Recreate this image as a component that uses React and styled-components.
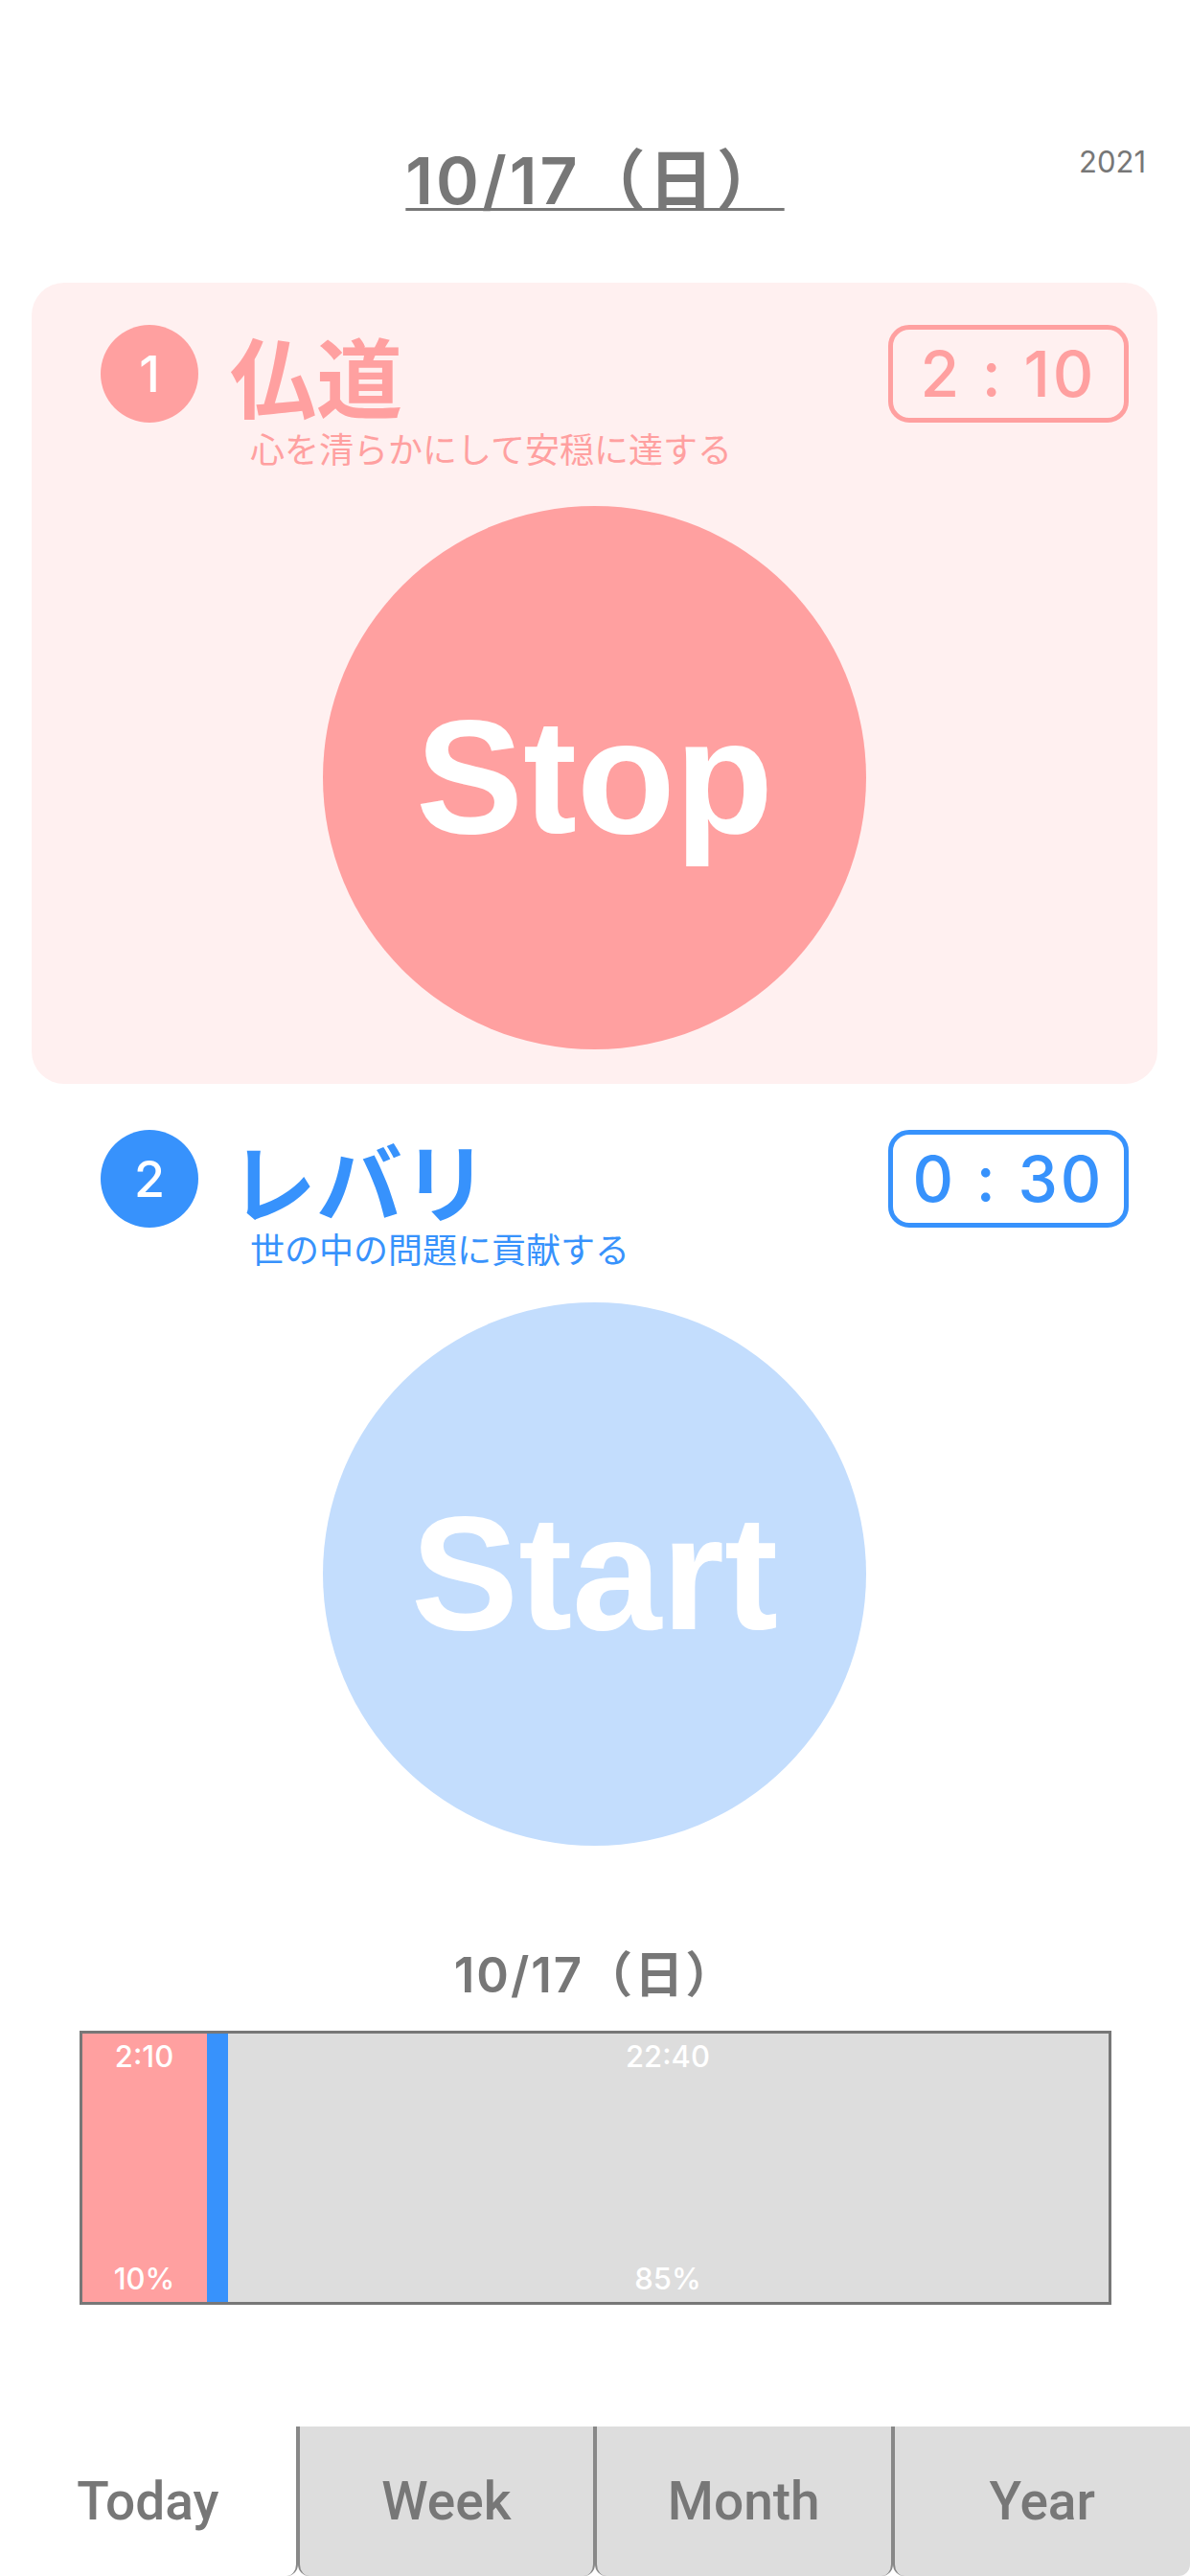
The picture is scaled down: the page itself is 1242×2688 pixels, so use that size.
import React from "react";
import styled, { createGlobalStyle } from "styled-components";

const GlobalStyle = createGlobalStyle`
html, body {
    margin: 0;
    padding: 0;
    background: #ffffff;
}

body {
    font-family: "Noto Sans CJK JP", "Noto Sans", sans-serif;
}
`

const pink = "#ffa0a0";
const blue = "#3792fc";
const gray = "#777777";
const latin = `Inter, "Noto Sans CJK JP", sans-serif`;

const Page = styled.div`
display: flex;
flex-direction: column;
min-height: 100vh;
box-sizing: border-box;
padding-top: 147px;
`

const Header = styled.header`
display: grid;
grid-template-columns: 1fr auto 1fr;
align-items: start;
`

const DateTitle = styled.h1`
grid-column: 2;
margin: 0;
font-family: ${latin};
font-size: 68px;
line-height: 82px;
font-weight: 600;
letter-spacing: 3px;
color: ${gray};
text-decoration: underline;
text-decoration-thickness: 3px;
text-underline-offset: 4px;
white-space: pre;
`

const Year = styled.span`
grid-column: 3;
justify-self: end;
margin: 3px 46px 0 0;
font-family: ${latin};
font-size: 31px;
line-height: 38px;
color: ${gray};
`

const Card = styled.section`
display: flex;
flex-direction: column;
margin: ${props => props.$mt}px 34px 0 33px;
padding: 44px 30px ${props => props.$pb}px;
border-radius: 34px;
background: ${props => props.$bg};
`

const Row = styled.div`
display: flex;
align-items: center;
height: 102px;
padding-left: 42px;
`

const Badge = styled.div`
display: flex;
align-items: center;
justify-content: center;
width: 102px;
height: 102px;
border-radius: 50%;
background: ${props => props.$color};
color: #ffffff;
font-family: ${latin};
font-size: 52px;
font-weight: 500;
`

const Title = styled.h2`
margin: 0 0 0 33px;
font-size: 90px;
line-height: 1;
font-weight: 700;
color: ${props => props.$color};
`

const TimeBox = styled.div`
display: flex;
align-items: center;
justify-content: center;
margin-left: auto;
width: 251px;
height: 102px;
box-sizing: border-box;
border: 5px solid ${props => props.$color};
border-radius: 22px;
color: ${props => props.$color};
font-family: ${latin};
font-size: 66px;
font-weight: 500;
letter-spacing: 3px;
white-space: pre;
`

const Subtitle = styled.p`
margin: ${props => props.$gap}px 0 0;
padding-left: 198px;
font-size: 36px;
line-height: 42px;
color: ${props => props.$color};
`

const BigButton = styled.button`
align-self: center;
width: 567px;
height: 567px;
margin-top: ${props => props.$mt}px;
padding: 0;
border: none;
border-radius: 50%;
background: ${props => props.$bg};
color: #ffffff;
font-family: "Liberation Sans", Arial, sans-serif;
font-size: 168px;
font-weight: 700;
`

const DayLabel = styled.h3`
margin: 104px 0 0;
text-align: center;
font-family: ${latin};
font-size: 51px;
line-height: 61px;
font-weight: 600;
letter-spacing: 2px;
color: ${gray};
`

const Chart = styled.div`
display: flex;
width: 1077px;
height: 286px;
margin: 28px auto 0;
box-sizing: border-box;
border: 3px solid ${gray};
background: #dddddd;
`

const Segment = styled.div`
display: flex;
flex-direction: column;
justify-content: space-between;
align-items: center;
flex: ${props => props.$w ? `0 0 ${props.$w}px` : "1 1 auto"};
padding: 5px 0;
background: ${props => props.$bg};
color: #ffffff;
font-family: ${latin};
font-size: 31px;
line-height: 38px;
font-weight: 500;
`

const TabBar = styled.nav`
display: grid;
grid-template-columns: repeat(4, 1fr);
height: 156px;
margin-top: auto;
`

const Tab = styled.button`
display: flex;
align-items: center;
justify-content: center;
padding: 0;
border: none;
border-left: ${props => props.$first ? "none" : "2px solid #888888"};
border-right: ${props => props.$last ? "none" : "2px solid #888888"};
border-radius: 0 0 12px 12px;
background: ${props => props.$active ? "#ffffff" : "#dddddd"};
color: ${gray};
font-family: Roboto, "Liberation Sans", Arial, sans-serif;
font-size: 55px;
font-weight: 500;
`

const goals = [
    { no: 1, title: "仏道", sub: "心を清らかにして安穏に達する", time: "2 : 10", color: pink, running: true },
    { no: 2, title: "レバリ", sub: "世の中の問題に貢献する", time: "0 : 30", color: blue, running: false },
];

const tabs = ["Today", "Week", "Month", "Year"];

const App = () => {
    return (
        <Page>
            <GlobalStyle />
            <Header>
                <DateTitle>10/17（日）</DateTitle>
                <Year>2021</Year>
            </Header>

            {goals.map(g => (
                <Card
                    key={g.no}
                    $bg={g.running ? "#fff0f0" : "transparent"}
                    $mt={g.running ? 66 : 4}
                    $pb={g.running ? 36 : 0}
                >
                    <Row>
                        <Badge $color={g.color}>{g.no}</Badge>
                        <Title $color={g.color}>{g.title}</Title>
                        <TimeBox $color={g.color}>{g.time}</TimeBox>
                    </Row>
                    <Subtitle $color={g.color} $gap={g.running ? 5 : 0}>{g.sub}</Subtitle>
                    <BigButton $bg={g.running ? pink : "#c3ddfd"} $mt={g.running ? 40 : 36}>
                        {g.running ? "Stop" : "Start"}
                    </BigButton>
                </Card>
            ))}

            <DayLabel>10/17（日）</DayLabel>
            <Chart>
                <Segment $bg={pink} $w={130}>
                    <span>2:10</span>
                    <span>10%</span>
                </Segment>
                <Segment $bg={blue} $w={22} />
                <Segment $bg="#dddddd">
                    <span>22:40</span>
                    <span>85%</span>
                </Segment>
            </Chart>

            <TabBar>
                {tabs.map((t, i) => (
                    <Tab key={t} $active={i === 0} $first={i === 0} $last={i === tabs.length - 1}>
                        {t}
                    </Tab>
                ))}
            </TabBar>
        </Page>
    )
}

export default App;
